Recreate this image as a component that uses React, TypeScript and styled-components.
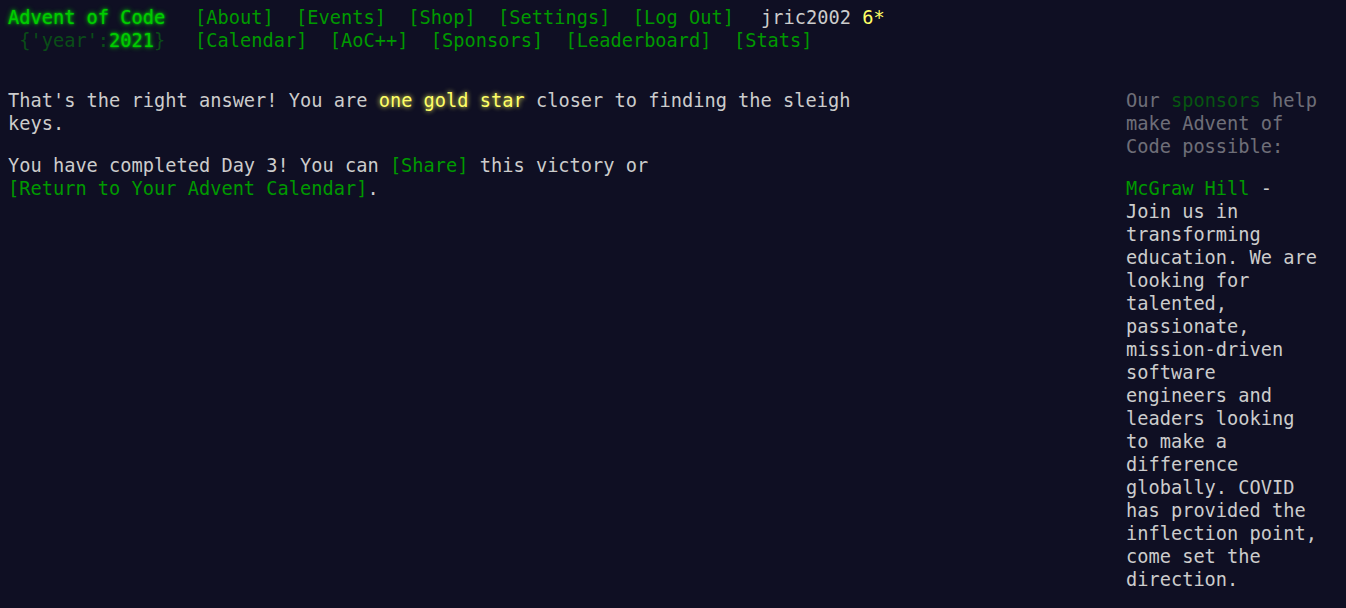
import React from "react";
import styled, { createGlobalStyle } from "styled-components";

const GlobalStyle = createGlobalStyle`
  html, body {
    margin: 0;
    padding: 0;
    background: #0f0f23;
  }
  body {
    color: #cccccc;
    font-family: "DejaVu Sans Mono", "Liberation Mono", monospace;
    font-size: 18.67px;
    line-height: 23px;
    padding: 6px 8px 0 8px;
    min-height: 602px;
  }
`;

const Header = styled.header`
  white-space: nowrap;
  margin-bottom: 2em;
`;

const HeaderRow = styled.div`
  display: flex;
  align-items: baseline;
`;

const Title = styled.h1`
  display: inline-block;
  margin: 0;
  padding-right: 1em;
  font-size: inherit;
  font-weight: normal;
  line-height: inherit;
  white-space: pre;
`;

const Glow = styled.a`
  color: #00cc00;
  text-decoration: none;
  text-shadow: 0 0 2px #00cc00, 0 0 5px #00cc00;
`;

const Wrap = styled.span`
  color: #00cc00;
  opacity: 0.33;
  white-space: pre;
`;

const Nav = styled.ul`
  display: flex;
  list-style: none;
  margin: 0;
  padding: 0;
`;

const NavItem = styled.li`
  padding: 0 0.6em;
`;

const Link = styled.a`
  color: #009900;
  text-decoration: none;
`;

const User = styled.div`
  margin-left: 16px;
  color: #cccccc;
`;

const StarCount = styled.span`
  color: #ffff66;
`;

const Page = styled.div`
  display: flex;
  justify-content: space-between;
  align-items: flex-start;
`;

const Main = styled.main`
  width: 846px;
`;

const Para = styled.p`
  margin: 0 0 1em 0;
`;

const Gold = styled.span`
  color: #ffff66;
  text-shadow: 0 0 5px #ffff66;
`;

const NoWrap = styled(Link)`
  white-space: nowrap;
`;

const Sidebar = styled.div`
  width: 200px;
  margin-right: 12px;
`;

const Quiet = styled.p`
  margin: 0 0 1em 0;
  opacity: 0.5;
`;

const Sponsor = styled.div``;

const topNav = ["[About]", "[Events]", "[Shop]", "[Settings]", "[Log Out]"];
const eventNav = ["[Calendar]", "[AoC++]", "[Sponsors]", "[Leaderboard]", "[Stats]"];

export default function App() {
  return (
    <>
      <GlobalStyle />
      <Header>
        <HeaderRow>
          <Title>
            <Glow href="#">Advent of Code</Glow>
          </Title>
          <Nav>
            {topNav.map((t) => (
              <NavItem key={t}>
                <Link href="#">{t}</Link>
              </NavItem>
            ))}
          </Nav>
          <User>
            jric2002 <StarCount>6*</StarCount>
          </User>
        </HeaderRow>
        <HeaderRow>
          <Title>
            {"\u00a0"}
            <Wrap>{"{'year':"}</Wrap>
            <Glow href="#">2021</Glow>
            <Wrap>{"}"}</Wrap>
          </Title>
          <Nav>
            {eventNav.map((t) => (
              <NavItem key={t}>
                <Link href="#">{t}</Link>
              </NavItem>
            ))}
          </Nav>
        </HeaderRow>
      </Header>
      <Page>
        <Main>
          <Para>
            That's the right answer! You are <Gold>one gold star</Gold> closer to finding the sleigh keys.
          </Para>
          <Para>
            You have completed Day 3! You can <Link href="#">[Share]</Link> this victory or{" "}
            <NoWrap href="#">[Return to Your Advent Calendar]</NoWrap>.
          </Para>
        </Main>
        <Sidebar>
          <Quiet>
            Our <Link href="#">sponsors</Link> help make Advent of Code possible:
          </Quiet>
          <Sponsor>
            <Link href="#">McGraw Hill</Link> - Join us in transforming education. We are looking for talented,
            passionate, mission-driven software engineers and leaders looking to make a difference globally. COVID
            has provided the inflection point, come set the direction.
          </Sponsor>
        </Sidebar>
      </Page>
    </>
  );
}
